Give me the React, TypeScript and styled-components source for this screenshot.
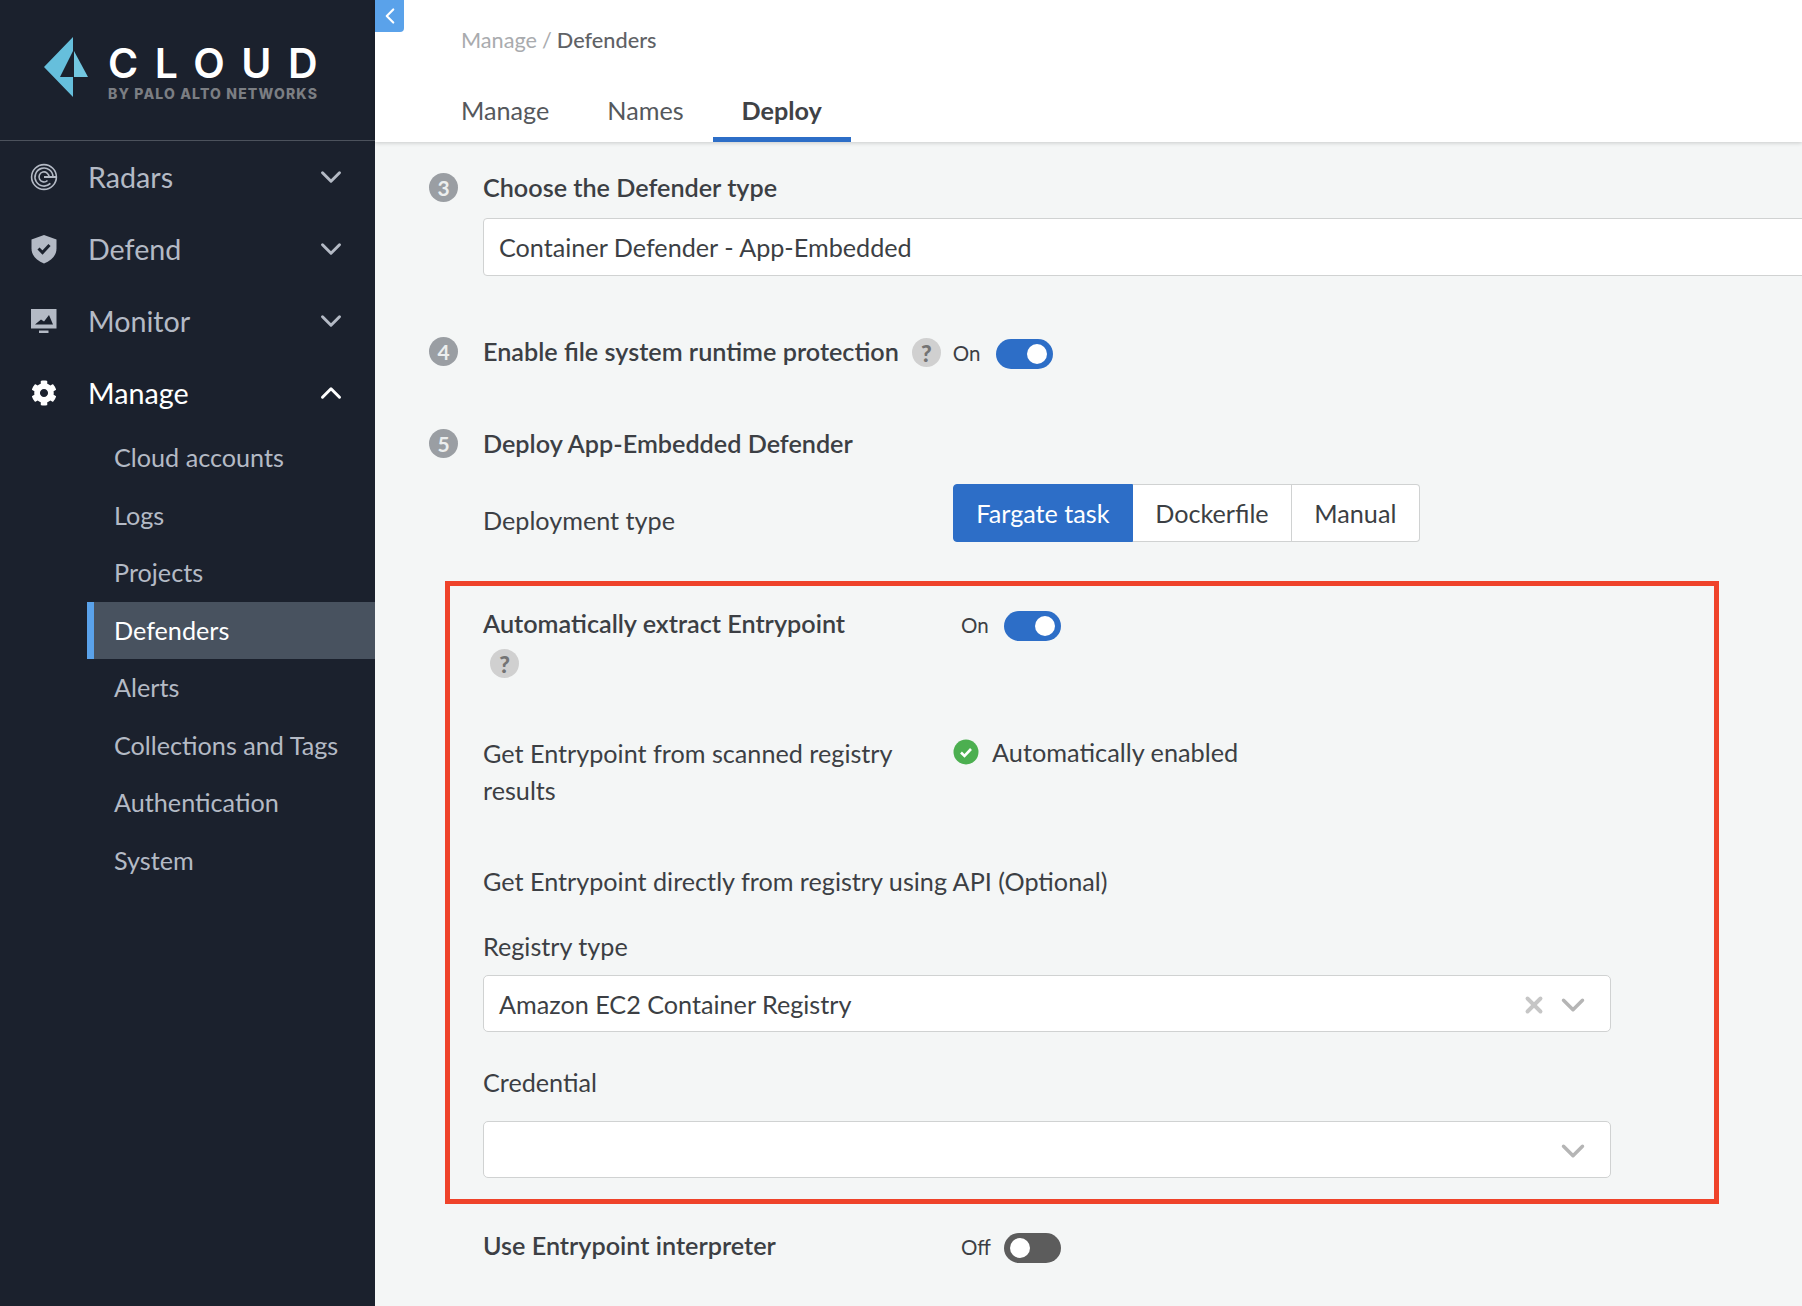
import React from "react";
import styled, { createGlobalStyle } from "styled-components";
import { ChevronDown, ChevronLeft, ChevronUp, X } from "lucide-react";
import { FaCog } from "react-icons/fa";

const GlobalStyle = createGlobalStyle`
  html, body {
    margin: 0;
    padding: 0;
    height: 100%;
    overflow: hidden;
  }
  body {
    font-family: Lato, "Open Sans", sans-serif;
    color: #3c3f44;
    background: #f4f6f6;
  }
  * {
    box-sizing: border-box;
  }
`;

const RadarIcon = () => (
  <svg width="28" height="28" viewBox="0 0 28 28" fill="none" stroke="#b4bac5" strokeWidth="1.6">
    <circle cx="14" cy="14" r="12.4" />
    <path d="M23 14a9 9 0 1 0-2.600 6.400" />
    <path d="M19 14a5 5 0 1 0-1.500 3.500" />
    <path d="M14 14h12" strokeWidth="2" />
  </svg>
);

const ShieldIcon = () => (
  <svg width="28" height="30" viewBox="0 0 28 30">
    <path
      fill="#b4bac5"
      d="M14 1 1.500 5.500v9c0 7 5 12 12.500 15 7.500-3 12.500-8 12.500-15v-9z"
    />
    <path d="m8.500 14.500 4 4 7-7.500" fill="none" stroke="#1b212d" strokeWidth="3" />
  </svg>
);

const MonitorIcon = () => (
  <svg width="28" height="26" viewBox="0 0 28 26">
    <path fill="#b4bac5" d="M1 1h25.500v19.500H1z" />
    <path d="M9 22.500h9.500V25H9z" fill="#b4bac5" />
    <path fill="#1b212d" d="M5 16.500l6-5 3 2 5-6.500 4 9.500z" />
  </svg>
);

const GreenCheck = () => (
  <svg width="26" height="26" viewBox="0 0 26 26">
    <circle cx="13" cy="13" r="12.500" fill="#4caf50" />
    <path d="m8 13.500 3.500 3.500 6.500-7" fill="none" stroke="#fff" strokeWidth="2.600" />
  </svg>
);

const Logo = () => (
  <LogoWrap>
    <svg width="46" height="62" viewBox="0 0 46 62">
      <path fill="#66bfdc" d="M0 31 29 1v14L16 41h13v20z" />
      <path fill="#72c7e0" d="M30 15 44 41H30z" />
    </svg>
    <LogoText>
      <LogoTitle>CLOUD</LogoTitle>
      <LogoSub>BY PALO ALTO NETWORKS</LogoSub>
    </LogoText>
  </LogoWrap>
);

const Toggle = ({ on }: { on: boolean }) => (
  <ToggleTrack $on={on}>
    <ToggleKnob $on={on} />
  </ToggleTrack>
);

const subItems = [
  "Cloud accounts",
  "Logs",
  "Projects",
  "Defenders",
  "Alerts",
  "Collections and Tags",
  "Authentication",
  "System",
];

export default function App() {
  return (
    <Page>
      <GlobalStyle />
      <Sidebar>
        <LogoBar>
          <Logo />
        </LogoBar>
        <NavList>
          <NavItem>
            <NavIcon>
              <RadarIcon />
            </NavIcon>
            <NavLabel>Radars</NavLabel>
            <ChevronDown size={34} strokeWidth={2.1} />
          </NavItem>
          <NavItem>
            <NavIcon>
              <ShieldIcon />
            </NavIcon>
            <NavLabel>Defend</NavLabel>
            <ChevronDown size={34} strokeWidth={2.1} />
          </NavItem>
          <NavItem>
            <NavIcon>
              <MonitorIcon />
            </NavIcon>
            <NavLabel>Monitor</NavLabel>
            <ChevronDown size={34} strokeWidth={2.1} />
          </NavItem>
          <NavItem $active>
            <NavIcon>
              <FaCog size={26} color="#fff" />
            </NavIcon>
            <NavLabel>Manage</NavLabel>
            <ChevronUp size={34} strokeWidth={2.1} />
          </NavItem>
        </NavList>
        <SubList>
          {subItems.map((s) => (
            <SubItem key={s} $active={s === "Defenders"}>
              {s}
            </SubItem>
          ))}
        </SubList>
      </Sidebar>
      <Main>
        <CollapseBtn>
          <ChevronLeft size={26} color="#fff" strokeWidth={2} />
        </CollapseBtn>
        <TopBar>
          <Breadcrumb>
            <Crumb>Manage</Crumb>
            <Crumb>/</Crumb>
            <CrumbCurrent>Defenders</CrumbCurrent>
          </Breadcrumb>
          <Tabs>
            <Tab>Manage</Tab>
            <Tab>Names</Tab>
            <Tab $active>Deploy</Tab>
          </Tabs>
        </TopBar>
        <Content>
          <StepRow>
            <StepNum>3</StepNum>
            <StepTitle>Choose the Defender type</StepTitle>
          </StepRow>
          <TypeInput>Container Defender - App-Embedded</TypeInput>
          <ProtectRow>
            <StepNum>4</StepNum>
            <StepTitle>Enable file system runtime protection</StepTitle>
            <HelpBadge>?</HelpBadge>
            <ToggleLabel>On</ToggleLabel>
            <Toggle on />
          </ProtectRow>
          <DeployRow>
            <StepNum>5</StepNum>
            <StepTitle>Deploy App-Embedded Defender</StepTitle>
          </DeployRow>
          <DeployTypeRow>
            <FieldLabel>Deployment type</FieldLabel>
            <SegGroup>
              <SegButton $active>Fargate task</SegButton>
              <SegButton>Dockerfile</SegButton>
              <SegButton>Manual</SegButton>
            </SegGroup>
          </DeployTypeRow>
          <Highlight>
            <SplitRow>
              <div>
                <StepTitle>Automatically extract Entrypoint</StepTitle>
                <HelpBelow>?</HelpBelow>
              </div>
              <ToggleCell>
                <ToggleLabel>On</ToggleLabel>
                <Toggle on />
              </ToggleCell>
            </SplitRow>
            <ScanRow>
              <WrapLabel>Get Entrypoint from scanned registry results</WrapLabel>
              <EnabledCell>
                <GreenCheck />
                <EnabledText>Automatically enabled</EnabledText>
              </EnabledCell>
            </ScanRow>
            <ApiLabel>Get Entrypoint directly from registry using API (Optional)</ApiLabel>
            <RegistryLabel>Registry type</RegistryLabel>
            <SelectBox>
              <span>Amazon EC2 Container Registry</span>
              <SelectIcons>
                <X size={26} color="#c6c6c6" strokeWidth={3.6} />
                <ChevronDown size={38} color="#b5b5b5" strokeWidth={2.2} />
              </SelectIcons>
            </SelectBox>
            <CredentialLabel>Credential</CredentialLabel>
            <SelectBox>
              <span />
              <SelectIcons>
                <ChevronDown size={38} color="#b5b5b5" strokeWidth={2.2} />
              </SelectIcons>
            </SelectBox>
          </Highlight>
          <InterpreterRow>
            <StepTitle>Use Entrypoint interpreter</StepTitle>
            <ToggleCell>
              <ToggleLabel>Off</ToggleLabel>
              <Toggle on={false} />
            </ToggleCell>
          </InterpreterRow>
        </Content>
      </Main>
    </Page>
  );
}

const Page = styled.div`
  display: flex;
  width: 1802px;
  height: 1306px;
  overflow: hidden;
`;

const Sidebar = styled.aside`
  width: 375px;
  flex-shrink: 0;
  background: #1b212d;
  color: #b4bac5;
`;

const LogoBar = styled.div`
  height: 141px;
  border-bottom: 1px solid #4c525c;
  padding: 36px 0 0 44px;
`;

const LogoWrap = styled.div`
  display: flex;
  gap: 18px;
`;

const LogoText = styled.div`
  padding-top: 9px;
  white-space: nowrap;
`;

const LogoTitle = styled.div`
  font-family: Inter, sans-serif;
  font-weight: 600;
  font-size: 41px;
  line-height: 36px;
  letter-spacing: 16.5px;
  color: #fff;
`;

const LogoSub = styled.div`
  font-family: Inter, sans-serif;
  font-weight: 800;
  font-size: 14px;
  line-height: 14px;
  margin-top: 6px;
  letter-spacing: 1.15px;
  color: #7b7e83;
`;

const NavList = styled.div``;

const NavItem = styled.div<{ $active?: boolean }>`
  display: flex;
  align-items: center;
  height: 72px;
  padding-right: 27px;
  font-size: 28.7px;
  color: ${(p) => (p.$active ? "#fff" : "#b4bac5")};
`;

const NavIcon = styled.div`
  display: flex;
  align-items: center;
  justify-content: center;
  width: 88px;
  padding-right: 1px;
  height: 32px;
`;

const NavLabel = styled.span`
  flex: 1;
`;

const SubList = styled.div``;

const SubItem = styled.div<{ $active?: boolean }>`
  display: flex;
  align-items: center;
  height: 57.5px;
  margin-left: 87px;
  padding-left: ${(p) => (p.$active ? "20px" : "27px")};
  padding-bottom: 1px;
  border-left: ${(p) => (p.$active ? "7px solid #5aa2ea" : "none")};
  background: ${(p) => (p.$active ? "#48525f" : "transparent")};
  color: ${(p) => (p.$active ? "#fff" : "#b4bac5")};
  font-size: 25.2px;
`;

const Main = styled.main`
  position: relative;
  flex: 1;
  min-width: 0;
`;

const CollapseBtn = styled.div`
  position: absolute;
  left: 0;
  top: 0;
  width: 29px;
  height: 32px;
  display: flex;
  align-items: center;
  justify-content: center;
  background: #5aa2ea;
  border-bottom-right-radius: 4px;
`;

const TopBar = styled.header`
  height: 142px;
  background: #fff;
  padding: 25px 0 0 86px;
  box-shadow: 0 1px 4px rgba(0, 0, 0, 0.18);
`;

const Breadcrumb = styled.div`
  display: flex;
  gap: 5px;
  font-size: 21.7px;
  line-height: 30px;
`;

const Crumb = styled.span`
  color: #a9abae;
`;

const CrumbCurrent = styled.span`
  color: #5f6266;
  font-weight: 500;
`;

const Tabs = styled.div`
  display: flex;
  margin: 24px 0 0 -29px;
`;

const Tab = styled.div<{ $active?: boolean }>`
  height: 63px;
  padding: 14px 29px 0;
  font-size: 25.2px;
  line-height: 34px;
  font-weight: ${(p) => (p.$active ? 700 : 400)};
  color: ${(p) => (p.$active ? "#3f4246" : "#55585c")};
  border-bottom: 5px solid ${(p) => (p.$active ? "#2d6ec7" : "transparent")};
`;

const Content = styled.div`
  padding: 28px 0 0 54px;
`;

const StepRow = styled.div`
  display: flex;
  align-items: center;
  height: 34px;
`;

const StepNum = styled.div`
  width: 29px;
  height: 29px;
  margin-right: 25px;
  flex-shrink: 0;
  border-radius: 50%;
  background: #9a9ea3;
  color: #eceeee;
  font-size: 21px;
  font-weight: 700;
  display: flex;
  align-items: center;
  justify-content: center;
`;

const StepTitle = styled.div`
  font-size: 25.2px;
  font-weight: 600;
  line-height: 34px;
  color: #3c3f44;
  white-space: nowrap;
`;

const TypeInput = styled.div`
  margin: 14px -60px 0 54px;
  height: 58px;
  padding-left: 15px;
  display: flex;
  align-items: center;
  background: #fff;
  border: 1px solid #d0d2d2;
  border-radius: 4px;
  font-size: 25.2px;
`;

const ProtectRow = styled(StepRow)`
  margin-top: 58px;
`;

const HelpBadge = styled.span`
  display: inline-flex;
  align-items: center;
  justify-content: center;
  width: 29px;
  height: 29px;
  margin: 3px 0 0 13px;
  border-radius: 50%;
  background: #d0d0d0;
  color: #747474;
  font-size: 23px;
  font-weight: 900;
`;

const HelpBelow = styled(HelpBadge)`
  margin: 9px 0 0 7px;
`;

const ToggleLabel = styled.span`
  font-size: 20.5px;
  margin: 3px 15px 0 12px;
`;

const ToggleTrack = styled.div<{ $on: boolean }>`
  width: 57px;
  height: 30px;
  margin-top: 5px;
  padding: 5px 6px;
  display: flex;
  justify-content: ${(p) => (p.$on ? "flex-end" : "flex-start")};
  border-radius: 16px;
  background: ${(p) => (p.$on ? "#2d6ec7" : "#5c5c5c")};
`;

const ToggleKnob = styled.div<{ $on: boolean }>`
  width: 20px;
  height: 20px;
  border-radius: 50%;
  background: #fff;
`;

const DeployRow = styled(StepRow)`
  margin-top: 58px;
`;

const FieldLabel = styled.span`
  font-size: 25.2px;
  line-height: 34px;
  color: #3c3f44;
`;

const EnabledText = styled(FieldLabel)`
  font-size: 25.3px;
`;

const DeployTypeRow = styled.div`
  display: grid;
  grid-template-columns: 470px auto;
  justify-content: start;
  align-items: start;
  padding-left: 54px;
  margin-top: 24px;
  > span {
    padding-top: 19px;
  }
`;

const SegGroup = styled.div`
  display: flex;
  height: 58px;
  width: max-content;
`;

const SegButton = styled.div<{ $active?: boolean }>`
  display: flex;
  align-items: center;
  padding: 0 22.3px 1px;
  font-size: 25.2px;
  background: ${(p) => (p.$active ? "#2d6ec7" : "#fff")};
  color: ${(p) => (p.$active ? "#fff" : "#3c3f44")};
  border: 1px solid ${(p) => (p.$active ? "#2d6ec7" : "#d0d2d2")};
  border-left-width: ${(p) => (p.$active ? "1px" : "0")};
  &:first-child {
    border-radius: 4px 0 0 4px;
  }
  &:last-child {
    border-radius: 0 4px 4px 0;
  }
`;

const Highlight = styled.section`
  width: 1274px;
  height: 623px;
  margin: 39px 0 0 16px;
  padding: 20px 0 0 33px;
  border: 5px solid #ef432a;
`;

const SplitRow = styled.div`
  display: grid;
  grid-template-columns: 478px auto;
  justify-content: start;
  height: 129px;
`;

const ToggleCell = styled.div`
  display: flex;
  align-items: center;
  height: 34px;
  > span {
    margin: 3px 0 0;
    width: 43px;
  }
`;

const ScanRow = styled.div`
  display: grid;
  grid-template-columns: 470px auto;
  justify-content: start;
  align-items: start;
  height: 129px;
`;

const WrapLabel = styled.div`
  font-size: 25.2px;
  line-height: 37px;
  width: 440px;
`;

const EnabledCell = styled.div`
  display: flex;
  align-items: center;
  gap: 13px;
`;

const ApiLabel = styled.div`
  font-size: 25.2px;
  line-height: 34px;
`;

const RegistryLabel = styled.div`
  font-size: 25.2px;
  line-height: 34px;
  margin-top: 31px;
`;

const CredentialLabel = styled(RegistryLabel)`
  margin-top: 33px;
  margin-bottom: 22px;
`;

const SelectBox = styled.div`
  width: 1128px;
  height: 57px;
  margin-top: 12px;
  padding: 0 18px 0 15px;
  display: flex;
  align-items: center;
  justify-content: space-between;
  background: #fff;
  border: 1px solid #d0d2d2;
  border-radius: 5px;
  font-size: 25.2px;
`;

const SelectIcons = styled.div`
  display: flex;
  align-items: center;
  gap: 7px;
  margin-top: 3px;
`;

const InterpreterRow = styled.div`
  display: grid;
  grid-template-columns: 478px auto;
  justify-content: start;
  padding-left: 54px;
  margin-top: 24px;
`;
